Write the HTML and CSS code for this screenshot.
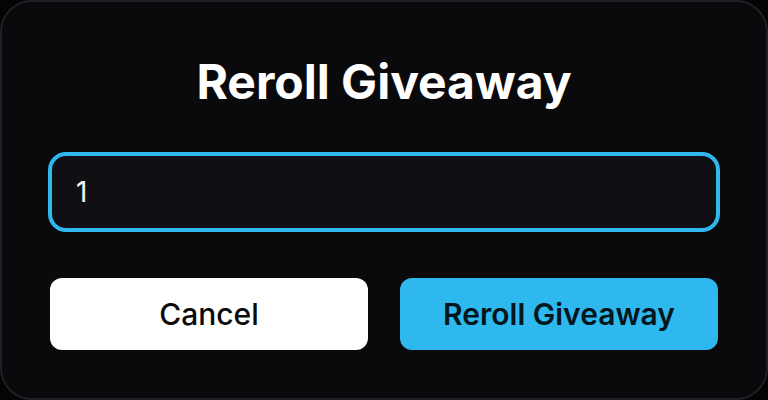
FILE: index.html
```html
<!DOCTYPE html>
<html lang="en">
<head>
    <meta charset="UTF-8">
    <meta name="viewport" content="width=device-width, initial-scale=1.0">
    <title>Reroll Giveaway</title>
    <link rel="stylesheet" href="styles.css">
</head>
<body>
    <form class="modal">
        <h1 class="title" id="modal-title">Reroll Giveaway</h1>
        <input class="field" type="text" inputmode="numeric" value="1" aria-labelledby="modal-title">
        <div class="actions">
            <button class="button cancel" type="button">Cancel</button>
            <button class="button confirm" type="submit">Reroll Giveaway</button>
        </div>
    </form>
</body>
</html>
```
FILE: styles.css
```css
* {
    box-sizing: border-box;
}
body {
    margin: 0;
    background: #040405;
    font-family: Inter, sans-serif;
}
.modal {
    background: #0a0a0c;
    border: 2px solid #1f1f25;
    border-radius: 32px;
    padding: 46px;
}
.title {
    margin: 0 0 36px;
    color: #ffffff;
    font-size: 48px;
    font-weight: 700;
    line-height: 68px;
    text-align: center;
}
.field {
    display: block;
    width: 100%;
    height: 80px;
    margin: 0 0 46px;
    padding: 0 24px;
    background: #101014;
    border: 4px solid #2eb8ee;
    border-radius: 18px;
    outline: none;
    color: #f4f4f5;
    font-family: inherit;
    font-size: 28px;
}
.actions {
    display: grid;
    grid-template-columns: 1fr 1fr;
    gap: 32px;
    padding: 0 2px 2px;
}
.button {
    height: 72px;
    padding: 0;
    border: none;
    border-radius: 12px;
    font-family: inherit;
    font-size: 30px;
    cursor: pointer;
}
.cancel {
    background: #ffffff;
    color: #0a0a0c;
    font-weight: 500;
}
.confirm {
    background: #2eb8ee;
    color: #04151c;
    font-weight: 600;
}
```
